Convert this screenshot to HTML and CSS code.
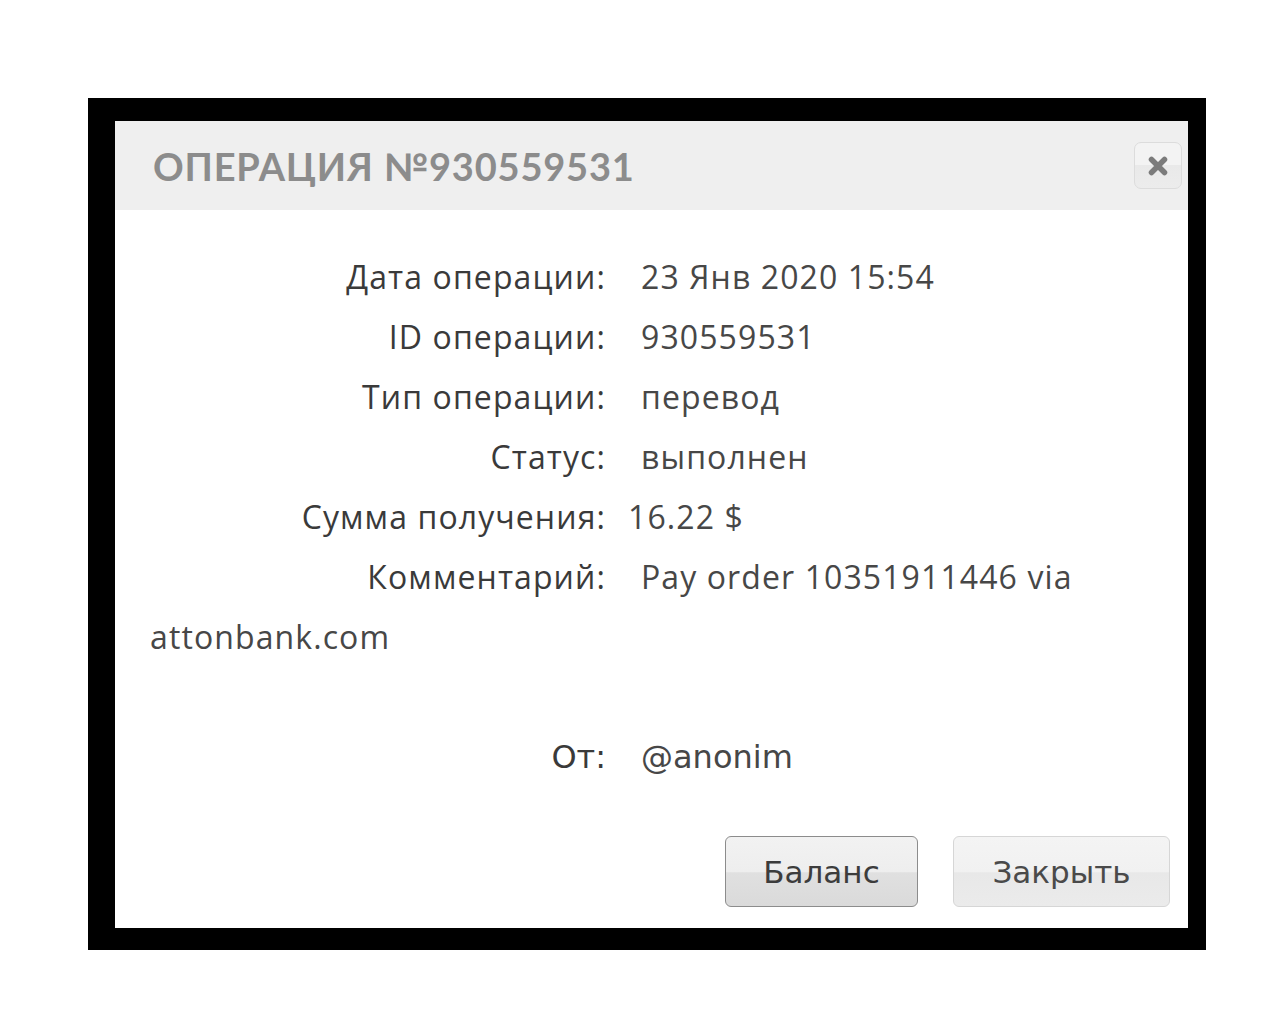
FILE: index.html
```html
<!DOCTYPE html>
<html lang="ru">
<head>
<meta charset="utf-8">
<title>Операция №930559531</title>
<link rel="stylesheet" href="styles.css">
</head>
<body>
<div class="frame">
  <div class="dialog">
    <div class="dialog-header">
      <h1 class="dialog-title">ОПЕРАЦИЯ №930559531</h1>
      <button class="close-btn" type="button" aria-label="Закрыть">
        <svg width="22" height="22" viewBox="0 0 22 22"><path d="M4.5 4.5 L17.5 17.5 M17.5 4.5 L4.5 17.5" stroke="#7b7b7b" stroke-width="5.5" stroke-linecap="round"/></svg>
      </button>
    </div>
    <div class="dialog-body">
      <div class="row"><span class="label">Дата операции:</span><span class="value">23 Янв 2020 15:54</span></div>
      <div class="row"><span class="label">ID операции:</span><span class="value">930559531</span></div>
      <div class="row"><span class="label">Тип операции:</span><span class="value">перевод</span></div>
      <div class="row"><span class="label">Статус:</span><span class="value">выполнен</span></div>
      <div class="row"><span class="label">Сумма получения:</span><span class="value value-tight">16.22 $</span></div>
      <div class="row"><span class="label">Комментарий:</span><span class="value">Pay order 10351911446 via</span> <span class="value">attonbank.com</span></div>
      <div class="row row-empty"></div>
      <div class="row row-from"><span class="label">От:</span><span class="value">@anonim</span></div>
    </div>
    <div class="dialog-footer">
      <button class="btn btn-primary" type="button">Баланс</button>
      <button class="btn" type="button">Закрыть</button>
    </div>
  </div>
</div>
</body>
</html>
```
FILE: styles.css
```css
html, body {
  margin: 0;
  padding: 0;
  background: #ffffff;
}

.frame {
  margin: 98px 0 0 88px;
  width: 1118px;
  box-sizing: border-box;
  background: #000000;
  padding: 23px 18px 22px 27px;
}

.dialog {
  background: #ffffff;
  height: 807px;
  display: flex;
  flex-direction: column;
}

.dialog-header {
  height: 89px;
  background: #efefef;
  display: flex;
  align-items: center;
  justify-content: space-between;
  padding: 0 6px 0 38px;
}

.dialog-title {
  margin: 0;
  font-family: "Lato", "DejaVu Sans", sans-serif;
  font-weight: 700;
  font-size: 38px;
  letter-spacing: 0.8px;
  color: #8c8c8c;
}

.close-btn {
  width: 48px;
  height: 47px;
  border: 1px solid #dcdcdc;
  border-radius: 7px;
  background: linear-gradient(#f3f3f3 0%, #f3f3f3 50%, #e9e9e9 50%, #ececec 100%);
  display: flex;
  align-items: center;
  justify-content: center;
  padding: 0;
}

.dialog-body {
  padding: 37px 34px 0 35px;
  font-family: "Open Sans", "DejaVu Sans", sans-serif;
  font-size: 32px;
  letter-spacing: 1.1px;
  line-height: 60px;
  color: #474747;
}

.row-empty {
  height: 60px;
}

.label {
  display: inline-block;
  width: 456px;
  margin-right: 35px;
  text-align: right;
  color: #3a3a3a;
}

.value-tight {
  margin-left: -13px;
}

.row-from {
  font-family: "DejaVu Sans", Verdana, sans-serif;
  font-size: 32px;
  letter-spacing: 0;
}

.dialog-footer {
  margin-top: auto;
  padding: 0 18px 21px 0;
  display: flex;
  justify-content: flex-end;
  gap: 35px;
}

.btn {
  height: 71px;
  width: 217px;
  border: 1px solid #d6d6d6;
  border-radius: 6px;
  background: linear-gradient(#f4f4f4 0%, #f1f1f1 50%, #e8e8e8 52%, #ebebeb 100%);
  font-family: "DejaVu Sans", Verdana, sans-serif;
  font-size: 31px;
  color: #4a4a4a;
  padding: 0;
}

.btn-primary {
  width: 193px;
  border-color: #8c8c8c;
  background: linear-gradient(#f2f2f2 0%, #eeeeee 50%, #e0e0e0 52%, #dadada 100%);
  color: #3c3c3c;
}
```
